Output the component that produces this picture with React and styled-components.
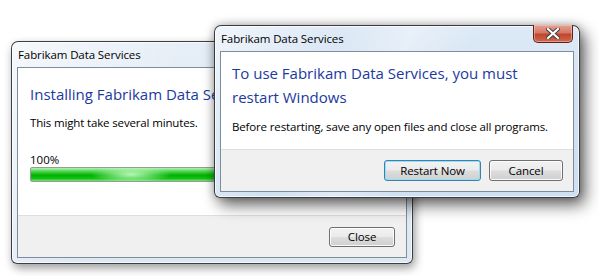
import React from "react";
import styled, { createGlobalStyle, css } from "styled-components";

const Global = createGlobalStyle`
  html, body { margin: 0; padding: 0; background: #fff; }
  body { font-family: "Open Sans", "Noto Sans", sans-serif; }
  * { box-sizing: border-box; }
`;

const Desktop = styled.div`
  position: relative;
  width: 599px;
  height: 276px;
  background: #fff;
  overflow: hidden;
`;

const Window = styled.div`
  position: absolute;
  left: ${(p) => p.$x}px;
  top: ${(p) => p.$y}px;
  width: ${(p) => p.$w}px;
  height: ${(p) => p.$h}px;
  display: flex;
  flex-direction: column;
  padding: 0 5px 5px;
  border: 1px solid rgba(30, 30, 30, 0.85);
  border-radius: 7px 7px 6px 6px;
  ${(p) =>
    p.$active
      ? css`
          background:
            linear-gradient(115deg, rgba(255,255,255,0.55) 0%, rgba(255,255,255,0) 30%, rgba(255,255,255,0.35) 45%, rgba(255,255,255,0) 60%),
            linear-gradient(180deg, #dde9f6 0%, #d3e2f2 40%, #cfe0f2 100%);
          box-shadow: inset 0 0 0 1px rgba(255,255,255,0.7), 5px 7px 16px rgba(0,0,0,0.6), 0 0 8px rgba(0,0,0,0.25);
        `
      : css`
          background:
            linear-gradient(115deg, rgba(255,255,255,0.6) 0%, rgba(255,255,255,0) 35%),
            linear-gradient(180deg, #e6eef7 0%, #dde8f4 100%);
          box-shadow: inset 0 0 0 1px rgba(255,255,255,0.7), 2px 4px 10px rgba(0,0,0,0.4);
        `}
`;

const TitleBar = styled.div`
  height: 25px;
  display: flex;
  align-items: center;
  padding-left: 1px;
  font-size: 11.5px;
  letter-spacing: -0.1px;
  color: #000;
`;

const TitleText = styled.span`
  flex: 1;
`;

const CloseBox = styled.div`
  align-self: flex-start;
  margin-top: -1px;
  margin-right: 1px;
  width: 40px;
  height: 18px;
  border: 1px solid #5b2418;
  border-top: none;
  border-radius: 0 0 5px 5px;
  background: linear-gradient(180deg, #e8a293 0%, #d47866 45%, #c0452f 55%, #cc6a4f 100%);
  box-shadow: inset 0 0 0 1px rgba(255, 200, 190, 0.5);
  display: flex;
  align-items: center;
  justify-content: center;
`;

const Client = styled.div`
  flex: 1;
  display: flex;
  flex-direction: column;
  border: 1px solid #7f8c99;
  background: #fff;
  overflow: hidden;
`;

const Content = styled.div`
  flex: 1;
  padding: ${(p) => p.$pt}px 12px 0 ${(p) => p.$pl}px;
`;

const Heading = styled.div`
  font-size: 15px;
  line-height: 24px;
  color: #1b3aa0;
  white-space: ${(p) => (p.$nowrap ? "nowrap" : "normal")};
`;

const Body = styled.div`
  margin-top: ${(p) => p.$mt}px;
  font-size: 11.5px;
  letter-spacing: -0.15px;
  line-height: 16px;
  color: #000;
  white-space: nowrap;
`;

const Percent = styled.div`
  margin-top: 22px;
  font-size: 11.5px;
  line-height: 14px;
  color: #000;
`;

const Progress = styled.div`
  width: 365px;
  height: 15px;
  border: 1px solid #9a9a9a;
  border-radius: 2px;
  background:
    radial-gradient(ellipse 40px 9px at 100px 50%, rgba(200,255,200,0.9), rgba(200,255,200,0) 100%),
    linear-gradient(180deg, #b6f0b6 0%, #3fd23f 30%, #06b006 55%, #0fc10f 80%, #7ae27a 100%);
`;

const Footer = styled.div`
  height: ${(p) => p.$h}px;
  border-top: 1px solid #dfdfdf;
  background: #f0f0f0;
  display: flex;
  justify-content: flex-end;
  align-items: center;
  gap: 8px;
  padding: 0 ${(p) => p.$pr}px 0 0;
`;

const Button = styled.button`
  width: ${(p) => p.$w}px;
  height: ${(p) => p.$h}px;
  padding: 0;
  font-family: inherit;
  font-size: 11.5px;
  letter-spacing: -0.1px;
  color: #000;
  border-radius: 3px;
  border: 1px solid ${(p) => (p.$default ? "#3c7fb1" : "#707070")};
  background: linear-gradient(180deg, #f2f2f2 0%, #ebebeb 48%, #dddddd 52%, #cfcfcf 100%);
  box-shadow: inset 0 0 0 1px ${(p) => (p.$default ? "#92e0f6" : "rgba(255,255,255,0.85)")};
`;

const XIcon = () => (
  <svg width="14" height="11" viewBox="0 0 14 11">
    <path d="M2 1 L12 10 M12 1 L2 10" stroke="#3a3a3a" strokeWidth="4" strokeLinecap="square" />
    <path d="M2 1 L12 10 M12 1 L2 10" stroke="#fff" strokeWidth="2.2" strokeLinecap="square" />
  </svg>
);

export default function App() {
  return (
    <>
      <Global />
      <Desktop>
        <Window $x={11} $y={41} $w={402} $h={223}>
          <TitleBar>
            <TitleText>Fabrikam Data Services</TitleText>
          </TitleBar>
          <Client>
            <Content $pt={14} $pl={12}>
              <Heading $nowrap>Installing Fabrikam Data Services</Heading>
              <Body $mt={9}>This might take several minutes.</Body>
              <Percent>100%</Percent>
              <Progress />
            </Content>
            <Footer $h={42} $pr={11}>
              <Button $w={66} $h={20}>Close</Button>
            </Footer>
          </Client>
        </Window>

        <Window $active $x={214} $y={25} $w={366} $h={173}>
          <TitleBar>
            <TitleText>Fabrikam Data Services</TitleText>
            <CloseBox>
              <XIcon />
            </CloseBox>
          </TitleBar>
          <Client>
            <Content $pt={9} $pl={11}>
              <Heading>To use Fabrikam Data Services, you must restart Windows</Heading>
              <Body $mt={10}>Before restarting, save any open files and close all programs.</Body>
            </Content>
            <Footer $h={42} $pr={10}>
              <Button $default $w={97} $h={21}>Restart Now</Button>
              <Button $w={74} $h={21}>Cancel</Button>
            </Footer>
          </Client>
        </Window>
      </Desktop>
    </>
  );
}
